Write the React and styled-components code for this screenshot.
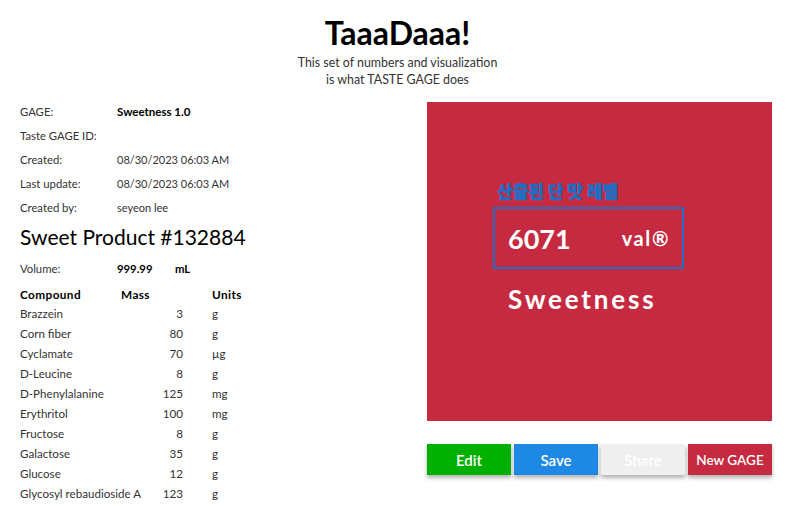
import React from 'react';
import styled, { createGlobalStyle } from 'styled-components';

const GlobalStyle = createGlobalStyle`
  body {
    margin: 0;
    background: #ffffff;
    font-family: 'Lato', 'Noto Sans', sans-serif;
    color: #222;
  }
`;

const Page = styled.div`
  width: 795px;
  height: 506px;
  overflow: hidden;
`;

const Header = styled.header`
  display: flex;
  flex-direction: column;
  align-items: center;
  padding-top: 14px;
`;

const Title = styled.h1`
  margin: 0;
  font-size: 32px;
  font-weight: 700;
  line-height: 38px;
  color: #000;
`;

const Subtitle = styled.p`
  margin: 2px 0 0;
  font-size: 12.4px;
  line-height: 17px;
  color: #333;
  text-align: center;
`;

const Body = styled.div`
  display: flex;
  justify-content: space-between;
  padding: 11px 23px 0 20px;
`;

const InfoColumn = styled.div`
  width: 260px;
`;

const InfoRow = styled.div`
  display: grid;
  grid-template-columns: 97px 1fr;
  height: 24px;
  align-items: center;
  font-size: 11.3px;
  color: #333;
`;

const InfoValue = styled.span`
  font-size: ${(p) => (p.bold ? '11.5px' : '11px')};
  font-weight: ${(p) => (p.bold ? 700 : 400)};
  color: ${(p) => (p.bold ? '#000' : '#333')};
`;

const Product = styled.h2`
  margin: 3px 0 0;
  font-size: 21px;
  font-weight: 400;
  line-height: 30px;
  color: #000;
`;

const VolumeRow = styled.div`
  display: grid;
  grid-template-columns: 97px 58px 1fr;
  height: 26px;
  margin-top: 3px;
  align-items: center;
  font-size: 11.3px;
  color: #333;
`;

const Strong = styled.span`
  font-weight: 700;
  color: #000;
`;

const Table = styled.div`
  margin-top: 4px;
`;

const TableRow = styled.div`
  display: grid;
  grid-template-columns: 101px 62px 29px 1fr;
  height: ${(p) => (p.head ? '18px' : '20px')};
  align-items: center;
  font-size: 11.6px;
  color: #333;
  white-space: nowrap;
`;

const HeadCell = styled.span`
  font-size: 11.8px;
  font-weight: 700;
  letter-spacing: 0.4px;
  color: #000;
`;

const NumCell = styled.span`
  text-align: right;
`;

const RightColumn = styled.div`
  display: flex;
  flex-direction: column;
  width: 345px;
  margin-top: 3px;
`;

const Panel = styled.div`
  height: 319px;
  background: #c62a40;
  display: flex;
  flex-direction: column;
  padding: 79px 0 0 66px;
  box-sizing: border-box;
`;

const PanelLabel = styled.div`
  font-family: 'Noto Sans CJK KR', sans-serif;
  font-size: 17px;
  font-weight: 900;
  color: #1c6fc4;
  -webkit-text-stroke: 0.5px #1c6fc4;
  line-height: 20px;
  margin-left: 4px;
`;

const ValueBox = styled.div`
  margin-top: 6px;
  width: 191px;
  height: 62px;
  box-sizing: border-box;
  border: 2px solid #1c6fc4;
  display: flex;
  align-items: center;
  justify-content: space-between;
  padding: 0 12px 0 13px;
  color: #fff;
`;

const BigNumber = styled.span`
  font-size: 27px;
  font-weight: 700;
`;

const Unit = styled.span`
  font-size: 20px;
  font-weight: 700;
  letter-spacing: 1.6px;
`;

const Metric = styled.div`
  margin: 14px 0 0 15px;
  font-size: 26px;
  font-weight: 700;
  letter-spacing: 2.8px;
  color: #fff;
`;

const ButtonRow = styled.div`
  display: flex;
  gap: 3px;
  margin-top: 23px;
`;

const ActionButton = styled.button`
  flex: 1;
  height: 31px;
  border: none;
  background: ${(p) => p.bg};
  color: #fff;
  font-family: 'Lato', sans-serif;
  font-size: ${(p) => (p.small ? '13.5px' : '15px')};
  font-weight: 600;
  box-shadow: 0 3px 4px rgba(0, 0, 0, 0.3);
  cursor: pointer;
`;

const compounds = [
  ['Brazzein', 3, 'g'],
  ['Corn fiber', 80, 'g'],
  ['Cyclamate', 70, 'µg'],
  ['D-Leucine', 8, 'g'],
  ['D-Phenylalanine', 125, 'mg'],
  ['Erythritol', 100, 'mg'],
  ['Fructose', 8, 'g'],
  ['Galactose', 35, 'g'],
  ['Glucose', 12, 'g'],
  ['Glycosyl rebaudioside A', 123, 'g'],
];

const info = [
  ['GAGE:', 'Sweetness 1.0', true],
  ['Taste GAGE ID:', '', false],
  ['Created:', '08/30/2023 06:03 AM', false],
  ['Last update:', '08/30/2023 06:03 AM', false],
  ['Created by:', 'seyeon lee', false],
];

const App = () => {
  return (
    <Page>
      <GlobalStyle />
      <Header>
        <Title>TaaaDaaa!</Title>
        <Subtitle>
          This set of numbers and visualization
          <br />
          is what TASTE GAGE does
        </Subtitle>
      </Header>
      <Body>
        <InfoColumn>
          {info.map(([label, value, bold]) => (
            <InfoRow key={label}>
              <span>{label}</span>
              <InfoValue bold={bold}>{value}</InfoValue>
            </InfoRow>
          ))}
          <Product>Sweet Product #132884</Product>
          <VolumeRow>
            <span>Volume:</span>
            <Strong>999.99</Strong>
            <Strong>mL</Strong>
          </VolumeRow>
          <Table>
            <TableRow head>
              <HeadCell>Compound</HeadCell>
              <HeadCell>Mass</HeadCell>
              <span />
              <HeadCell>Units</HeadCell>
            </TableRow>
            {compounds.map(([name, mass, unit]) => (
              <TableRow key={name}>
                <span>{name}</span>
                <NumCell>{mass}</NumCell>
                <span />
                <span>{unit}</span>
              </TableRow>
            ))}
          </Table>
        </InfoColumn>
        <RightColumn>
          <Panel>
            <PanelLabel>산출된 단 맛 레벨</PanelLabel>
            <ValueBox>
              <BigNumber>6071</BigNumber>
              <Unit>val®</Unit>
            </ValueBox>
            <Metric>Sweetness</Metric>
          </Panel>
          <ButtonRow>
            <ActionButton bg="#00b000">Edit</ActionButton>
            <ActionButton bg="#1e88e5">Save</ActionButton>
            <ActionButton bg="#efefef">Share</ActionButton>
            <ActionButton bg="#c62a40" small>New GAGE</ActionButton>
          </ButtonRow>
        </RightColumn>
      </Body>
    </Page>
  );
};

export default App;
